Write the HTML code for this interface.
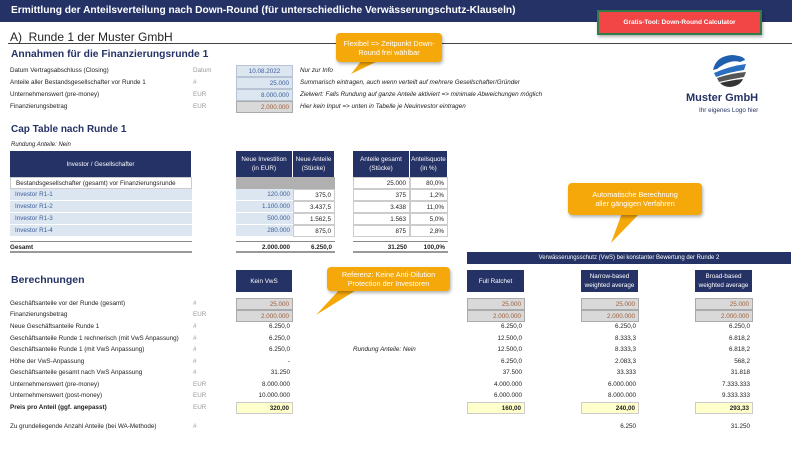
<!DOCTYPE html>
<html><head><meta charset="utf-8"><style>
*{margin:0;padding:0;box-sizing:border-box}
body{width:798px;height:450px;background:#fff;position:relative;overflow:hidden;font-family:"Liberation Sans",sans-serif;font-size:6.3px;color:#222}
div{position:absolute;white-space:nowrap}
.l{left:10px}
.u{color:#999}
.n{font-style:italic;left:300px}
.r{text-align:right;padding-right:3px;height:12px;line-height:12px}
.in{background:#dce6f1;border:1px solid #b8c4d4;color:#3b5d9a}
.gr{background:#d9d9d9;border:1px solid #aaa;color:#a0603a}
.hd{background:#253266;color:#fff;text-align:center;display:flex;align-items:center;justify-content:center;white-space:normal;line-height:9px;border-right:1px solid #fff}
.y{background:#ffffcc;border:1px solid #ccc;font-weight:bold}
.co{background:#f5a80a;color:#fff;text-align:center;border-radius:4px;font-size:7.3px;line-height:9px;box-shadow:1px 2px 3px rgba(0,0,0,.3);white-space:normal;display:flex;align-items:center;justify-content:center}
.ct{background:#dce6f1;color:#3b5d9a;border-bottom:1px solid #fff}
</style></head><body>
<div style="left:0;top:0;width:792px;height:22px;background:#253266"></div>
<div style="left:11px;top:5px;color:#fff;font-weight:bold;font-size:10.2px">Ermittlung der Anteilsverteilung nach Down-Round (für unterschiedliche Verwässerungschutz-Klauseln)</div>
<div style="left:597px;top:10px;width:165px;height:25px;background:#f24545;border:2px solid #2e7d4a;color:#fff;font-weight:bold;font-size:6.5px;display:flex;align-items:center;justify-content:center;box-shadow:1px 2px 3px rgba(0,0,0,.3)">Gratis-Tool: Down-Round Calculator</div>
<div style="left:10px;top:30px;font-size:12px">A)&nbsp; Runde 1 der Muster GmbH</div>
<div style="left:8px;top:43px;width:784px;height:1px;background:#444"></div>
<div style="left:11px;top:49px;font-size:10.3px;font-weight:bold;color:#253266">Annahmen für die Finanzierungsrunde 1</div>

<div class="l" style="top:67px">Datum Vertragsabschluss (Closing)</div><div class="u" style="left:193px;top:67px">Datum</div>
<div class="in" style="left:236px;top:65px;width:57px;height:12px;line-height:11px;text-align:center">10.08.2022</div><div class="n" style="top:67px">Nur zur Info</div>
<div class="l" style="top:79px">Anteile aller Bestandsgesellschafter vor Runde 1</div><div class="u" style="left:193px;top:79px">#</div>
<div class="in r" style="left:236px;top:77px;width:57px">25.000</div><div class="n" style="top:79px">Summarisch eintragen, auch wenn verteilt auf mehrere Gesellschafter/Gründer</div>
<div class="l" style="top:91px">Unternehmenswert (pre-money)</div><div class="u" style="left:193px;top:91px">EUR</div>
<div class="in r" style="left:236px;top:89px;width:57px">8.000.000</div><div class="n" style="top:91px">Zielwert: Falls Rundung auf ganze Anteile aktiviert =&gt; minimale Abweichungen möglich</div>
<div class="l" style="top:103px">Finanzierungsbetrag</div><div class="u" style="left:193px;top:103px">EUR</div>
<div class="gr r" style="left:236px;top:101px;width:57px">2.000.000</div><div class="n" style="top:103px">Hier kein Input =&gt; unten in Tabelle je Neuinvestor eintragen</div>

<svg style="position:absolute;left:0;top:0" width="798" height="450">
<polygon points="362,60 380,60 351,74" fill="#f5a80a"/>
<polygon points="340,289 358,289 316,315" fill="#f5a80a"/>
<polygon points="622,213 640,213 611,243" fill="#f5a80a"/>
<path d="M713 70 Q716 56 732 55 Q744 56 745 60 L740 62 Q730 59 717 69 Z" fill="#1f5fae"/>
<path d="M714 73 Q730 66 746 64 L744 70 Q730 72 716 77 Z" fill="#2a6ec0"/>
<path d="M717 78 Q732 73 746 72 L744 77 Q732 79 719 82 Z" fill="#555"/>
<path d="M720 83 Q732 80 743 79 Q740 86 730 87 Q724 87 720 83 Z" fill="#333"/>
</svg>
<div class="co" style="left:336px;top:33px;width:106px;height:29px">Flexibel =&gt; Zeitpunkt Down-Round frei wählbar</div>
<div style="left:686px;top:92px;font-size:11px;font-weight:bold;color:#253266">Muster GmbH</div>
<div style="left:699px;top:107px;font-size:6.3px;color:#253266">Ihr eigenes Logo hier</div>

<div style="left:11px;top:124px;font-size:10px;font-weight:bold;color:#253266">Cap Table nach Runde 1</div>
<div style="left:11px;top:142px;font-style:italic;font-size:6px">Rundung Anteile: Nein</div>
<div class="hd" style="left:10px;top:151px;width:182px;height:26px">Investor / Gesellschafter</div>
<div class="hd" style="left:236px;top:151px;width:57px;height:26px">Neue Investition<br>(in EUR)</div>
<div class="hd" style="left:293px;top:151px;width:42px;height:26px">Neue Anteile<br>(Stücke)</div>
<div class="hd" style="left:353px;top:151px;width:57px;height:26px">Anteile gesamt<br>(Stücke)</div>
<div class="hd" style="left:410px;top:151px;width:38px;height:26px">Anteilsquote<br>(in %)</div>

<div style="left:10px;top:177px;width:182px;height:12px;line-height:12px;padding-left:5px;border:1px solid #ccc">Bestandsgesellschafter (gesamt) vor Finanzierungsrunde</div>
<div style="left:236px;top:177px;width:99px;height:12px;background:#b0b0b0"></div>
<div class="r" style="left:353px;top:177px;width:57px;border:1px solid #ccc">25.000</div>
<div class="r" style="left:410px;top:177px;width:38px;border:1px solid #ccc">80,0%</div>

<div class="ct" style="left:10px;top:189px;width:182px;height:12px;line-height:12px;padding-left:5px">Investor R1-1</div>
<div class="ct r" style="left:236px;top:189px;width:57px">120.000</div><div class="r" style="left:293px;top:189px;width:42px;border:1px solid #ccc">375,0</div>
<div class="r" style="left:353px;top:189px;width:57px;border:1px solid #ccc">375</div><div class="r" style="left:410px;top:189px;width:38px;border:1px solid #ccc">1,2%</div>
<div class="ct" style="left:10px;top:201px;width:182px;height:12px;line-height:12px;padding-left:5px">Investor R1-2</div>
<div class="ct r" style="left:236px;top:201px;width:57px">1.100.000</div><div class="r" style="left:293px;top:201px;width:42px;border:1px solid #ccc">3.437,5</div>
<div class="r" style="left:353px;top:201px;width:57px;border:1px solid #ccc">3.438</div><div class="r" style="left:410px;top:201px;width:38px;border:1px solid #ccc">11,0%</div>
<div class="ct" style="left:10px;top:213px;width:182px;height:12px;line-height:12px;padding-left:5px">Investor R1-3</div>
<div class="ct r" style="left:236px;top:213px;width:57px">500.000</div><div class="r" style="left:293px;top:213px;width:42px;border:1px solid #ccc">1.562,5</div>
<div class="r" style="left:353px;top:213px;width:57px;border:1px solid #ccc">1.563</div><div class="r" style="left:410px;top:213px;width:38px;border:1px solid #ccc">5,0%</div>
<div class="ct" style="left:10px;top:225px;width:182px;height:12px;line-height:12px;padding-left:5px">Investor R1-4</div>
<div class="ct r" style="left:236px;top:225px;width:57px">280.000</div><div class="r" style="left:293px;top:225px;width:42px;border:1px solid #ccc">875,0</div>
<div class="r" style="left:353px;top:225px;width:57px;border:1px solid #ccc">875</div><div class="r" style="left:410px;top:225px;width:38px;border:1px solid #ccc">2,8%</div>

<div style="left:10px;top:241px;width:182px;height:12px;border-top:1px solid #888;border-bottom:2px solid #999;font-weight:bold;line-height:11px">Gesamt</div>
<div class="r" style="left:236px;top:241px;width:57px;border-top:1px solid #888;border-bottom:2px solid #999;font-weight:bold;line-height:11px">2.000.000</div>
<div class="r" style="left:293px;top:241px;width:42px;border-top:1px solid #888;border-bottom:2px solid #999;font-weight:bold;line-height:11px">6.250,0</div>
<div class="r" style="left:353px;top:241px;width:57px;border-top:1px solid #888;border-bottom:2px solid #999;font-weight:bold;line-height:11px">31.250</div>
<div class="r" style="left:410px;top:241px;width:38px;border-top:1px solid #888;border-bottom:2px solid #999;font-weight:bold;line-height:11px">100,0%</div>

<div class="co" style="left:568px;top:183px;width:134px;height:32px;padding:0 18px">Automatische Berechnung aller gängigen Verfahren</div>
<div class="hd" style="left:467px;top:252px;width:325px;height:12px;font-size:6px">Verwässerungsschutz (VwS) bei konstanter Bewertung der Runde 2</div>

<div style="left:11px;top:274px;font-size:10.5px;font-weight:bold;color:#253266">Berechnungen</div>
<div class="hd" style="left:236px;top:270px;width:57px;height:22px">Kein VwS</div>
<div class="hd" style="left:467px;top:270px;width:58px;height:22px">Full Ratchet</div>
<div class="hd" style="left:581px;top:270px;width:58px;height:22px">Narrow-based<br>weighted average</div>
<div class="hd" style="left:695px;top:270px;width:58px;height:22px">Broad-based<br>weighted average</div>
<div class="co" style="left:327px;top:267px;width:123px;height:24px">Referenz: Keine Anti-Dilution Protection der Investoren</div>

<div class="l" style="top:300px">Geschäftsanteile vor der Runde (gesamt)</div><div class="u" style="left:193px;top:300px">#</div>
<div class="l" style="top:311px">Finanzierungsbetrag</div><div class="u" style="left:193px;top:311px">EUR</div>
<div class="l" style="top:323px">Neue Geschäftsanteile Runde 1</div><div class="u" style="left:193px;top:323px">#</div>
<div class="l" style="top:335px">Geschäftsanteile Runde 1 rechnerisch (mit VwS Anpassung)</div><div class="u" style="left:193px;top:335px">#</div>
<div class="l" style="top:346px">Geschäftsanteile Runde 1 (mit VwS Anpassung)</div><div class="u" style="left:193px;top:346px">#</div>
<div class="l" style="top:358px">Höhe der VwS-Anpassung</div><div class="u" style="left:193px;top:358px">#</div>
<div class="l" style="top:369px">Geschäftsanteile gesamt nach VwS Anpassung</div><div class="u" style="left:193px;top:369px">#</div>
<div class="l" style="top:381px">Unternehmenswert (pre-money)</div><div class="u" style="left:193px;top:381px">EUR</div>
<div class="l" style="top:392px">Unternehmenswert (post-money)</div><div class="u" style="left:193px;top:392px">EUR</div>
<div class="l" style="top:404px;font-weight:bold">Preis pro Anteil (ggf. angepasst)</div><div class="u" style="left:193px;top:404px">EUR</div>
<div class="l" style="top:423px">Zu grundeliegende Anzahl Anteile (bei WA-Methode)</div><div class="u" style="left:193px;top:423px">#</div>
<div style="left:353px;top:346px;font-style:italic">Rundung Anteile: Nein</div>

<div class="gr r" style="left:236px;top:298px;width:57px">25.000</div>
<div class="gr r" style="left:236px;top:310px;width:57px">2.000.000</div>
<div class="r" style="left:236px;top:321px;width:57px">6.250,0</div>
<div class="r" style="left:236px;top:333px;width:57px">6.250,0</div>
<div class="r" style="left:236px;top:344px;width:57px">6.250,0</div>
<div class="r" style="left:236px;top:356px;width:57px">-</div>
<div class="r" style="left:236px;top:367px;width:57px">31.250</div>
<div class="r" style="left:236px;top:379px;width:57px">8.000.000</div>
<div class="r" style="left:236px;top:390px;width:57px">10.000.000</div>
<div class="y r" style="left:236px;top:402px;width:57px">320,00</div>

<div class="gr r" style="left:467px;top:298px;width:58px">25.000</div>
<div class="gr r" style="left:467px;top:310px;width:58px">2.000.000</div>
<div class="r" style="left:467px;top:321px;width:58px">6.250,0</div>
<div class="r" style="left:467px;top:333px;width:58px">12.500,0</div>
<div class="r" style="left:467px;top:344px;width:58px">12.500,0</div>
<div class="r" style="left:467px;top:356px;width:58px">6.250,0</div>
<div class="r" style="left:467px;top:367px;width:58px">37.500</div>
<div class="r" style="left:467px;top:379px;width:58px">4.000.000</div>
<div class="r" style="left:467px;top:390px;width:58px">6.000.000</div>
<div class="y r" style="left:467px;top:402px;width:58px">160,00</div>

<div class="gr r" style="left:581px;top:298px;width:58px">25.000</div>
<div class="gr r" style="left:581px;top:310px;width:58px">2.000.000</div>
<div class="r" style="left:581px;top:321px;width:58px">6.250,0</div>
<div class="r" style="left:581px;top:333px;width:58px">8.333,3</div>
<div class="r" style="left:581px;top:344px;width:58px">8.333,3</div>
<div class="r" style="left:581px;top:356px;width:58px">2.083,3</div>
<div class="r" style="left:581px;top:367px;width:58px">33.333</div>
<div class="r" style="left:581px;top:379px;width:58px">6.000.000</div>
<div class="r" style="left:581px;top:390px;width:58px">8.000.000</div>
<div class="y r" style="left:581px;top:402px;width:58px">240,00</div>
<div class="r" style="left:581px;top:421px;width:58px">6.250</div>

<div class="gr r" style="left:695px;top:298px;width:58px">25.000</div>
<div class="gr r" style="left:695px;top:310px;width:58px">2.000.000</div>
<div class="r" style="left:695px;top:321px;width:58px">6.250,0</div>
<div class="r" style="left:695px;top:333px;width:58px">6.818,2</div>
<div class="r" style="left:695px;top:344px;width:58px">6.818,2</div>
<div class="r" style="left:695px;top:356px;width:58px">568,2</div>
<div class="r" style="left:695px;top:367px;width:58px">31.818</div>
<div class="r" style="left:695px;top:379px;width:58px">7.333.333</div>
<div class="r" style="left:695px;top:390px;width:58px">9.333.333</div>
<div class="y r" style="left:695px;top:402px;width:58px">293,33</div>
<div class="r" style="left:695px;top:421px;width:58px">31.250</div>
</body></html>
